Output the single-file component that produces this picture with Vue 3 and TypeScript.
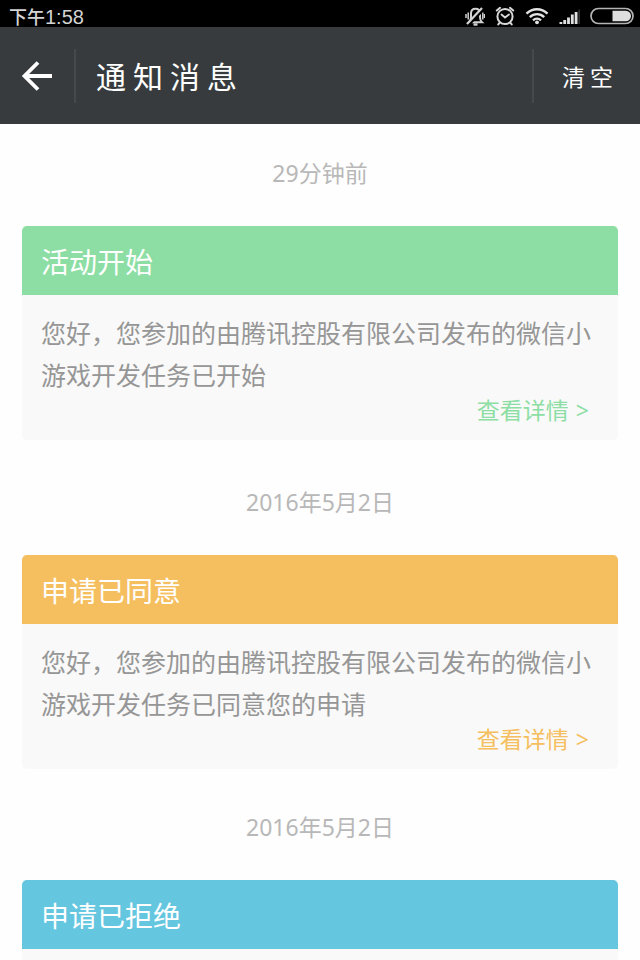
<script setup lang="ts">
interface Notice {
  id: number
  time: string
  title: string
  tone: 'green' | 'orange' | 'blue'
  message?: string
}

const notices: Notice[] = [
  {
    id: 1,
    time: '29分钟前',
    title: '活动开始',
    tone: 'green',
    message: '您好，您参加的由腾讯控股有限公司发布的微信小游戏开发任务已开始',
  },
  {
    id: 2,
    time: '2016年5月2日',
    title: '申请已同意',
    tone: 'orange',
    message: '您好，您参加的由腾讯控股有限公司发布的微信小游戏开发任务已同意您的申请',
  },
  { id: 3, time: '2016年5月2日', title: '申请已拒绝', tone: 'blue' },
]
</script>

<template>
  <div class="page">
    <div class="status">
      <span class="clock">下午<span class="digits">1:58</span></span>
      <div class="indicators">
        <svg class="bell" width="20" height="22" viewBox="0 0 20 22" fill="none" stroke="#d2d2d2">
          <path d="M4 17.300h13c-1.500-1.400-2-3-2-5V8.500c0-3-1.700-4.700-4.500-4.700S6 5.500 6 8.500v3.800c0 2-.5 3.600-2 5z" stroke-width="2" />
          <path d="M8.500 19.500h4" stroke-width="2.400" />
          <path d="M3.200 7.500v7M1 9v4M17.800 7.500v7M19.600 9v4" stroke-width="1.500" />
          <path d="M3.300 20.300L18.500 4.300" stroke="#000" stroke-width="2.400" />
          <path d="M2 19L17 3" stroke-width="2.200" />
        </svg>
        <svg class="alarm" width="20" height="22" viewBox="0 0 20 22" fill="none" stroke="#d8d8d8" stroke-linecap="round">
          <circle cx="10" cy="11.500" r="7.600" stroke-width="2" />
          <path d="M1.800 5.500L5 2.800M18.200 5.500L15 2.800M4.700 17.700l-1.400 1.700M15.300 17.700l1.400 1.700" stroke-width="2" />
          <path d="M6.500 9.500l3.500 3 4-3" stroke-width="1.800" />
        </svg>
        <svg class="wifi" width="24" height="22" viewBox="0 0 24 22" fill="none" stroke="#e2e2e2">
          <path d="M1.500 8.700C7.500 2.700 16.500 2.700 22.500 8.700" stroke-width="2.400" />
          <path d="M4.800 12.100C9 8.100 15 8.100 19.200 12.100" stroke-width="2.400" />
          <path d="M8 15.300c2.300-2.100 5.700-2.100 8 0" stroke-width="2.300" />
          <circle cx="12" cy="17.300" r="1.900" fill="#e2e2e2" stroke="none" />
        </svg>
        <svg class="signal" width="21" height="22" viewBox="0 0 21 22" fill="#e0e0e0">
          <rect x="0.500" y="17" width="2.800" height="2" />
          <rect x="4.300" y="15" width="2.800" height="4" />
          <rect x="8.100" y="12.500" width="2.800" height="6.500" />
          <rect x="11.900" y="9.500" width="2.800" height="9.500" />
          <rect x="15.700" y="7" width="2.800" height="12" />
          <rect x="19.300" y="4.500" width="1.700" height="14.500" fill="#303030" />
        </svg>
        <svg class="battery" width="44" height="18" viewBox="0 0 44 18">
          <rect x="1" y="1.500" width="42" height="15" rx="7.500" fill="none" stroke="#b4b4b4" stroke-width="1.700" />
          <path d="M22.500 3.800h13.300a5.200 5.200 0 0 1 0 10.400H22.500z" fill="#dedede" />
        </svg>
      </div>
    </div>

    <header class="bar">
      <button class="back" type="button" aria-label="返回">
        <svg width="32" height="32" viewBox="0 0 32 32" fill="none" stroke="#fff" stroke-width="3.800">
          <path d="M17 2.500L3.500 16 17 29.500M3 16h28" />
        </svg>
      </button>
      <h1 class="heading">通知消息</h1>
      <button class="clear" type="button">清空</button>
    </header>

    <main class="list">
      <section v-for="notice in notices" :key="notice.id" class="notice" :class="notice.tone">
        <time class="time">{{ notice.time }}</time>
        <article class="card">
          <h2 class="title">{{ notice.title }}</h2>
          <div class="body">
            <p v-if="notice.message" class="message">{{ notice.message }}</p>
            <a v-if="notice.message" class="more" href="#">
              <span>查看详情</span>
              <span>&gt;</span>
            </a>
          </div>
        </article>
      </section>
    </main>
  </div>
</template>

<style>
body {
  margin: 0;
  background: #fefefe;
}
</style>

<style scoped>
.page {
  height: 100vh;
  overflow: hidden;
  font-family: "Noto Sans", "Noto Sans CJK SC", sans-serif;
  background: #fefefe;
}

.status {
  display: flex;
  align-items: center;
  justify-content: space-between;
  height: 27px;
  padding: 5px 6px 0 9px;
  box-sizing: border-box;
  background: #000;
  color: #d4d4d4;
}

.clock {
  font-family: "Noto Sans CJK SC", sans-serif;
  font-size: 18px;
  font-weight: 500;
  line-height: 22px;
}

.digits {
  font-family: "Liberation Sans", sans-serif;
  font-size: 20px;
}

.indicators {
  display: flex;
  align-items: center;
  gap: 10px;
}

.indicators svg {
  display: block;
}

.bar {
  display: flex;
  align-items: center;
  height: 97px;
  background: #373b3e;
  color: #fff;
}

button {
  margin: 0;
  border: 0;
  background: none;
  color: inherit;
  font-family: inherit;
  cursor: pointer;
}

.back {
  display: flex;
  align-items: center;
  width: 76px;
  height: 54px;
  padding: 0 0 0 21px;
  border-right: 2px solid #45494c;
}

.heading {
  flex: 1;
  margin: 0;
  padding: 2px 0 0 20px;
  font-size: 30px;
  font-weight: 400;
  line-height: 40px;
  letter-spacing: 7px;
}

.clear {
  height: 54px;
  padding: 2px 22px 0 28px;
  border-left: 2px solid #45494c;
  font-size: 23px;
  line-height: 32px;
  letter-spacing: 5px;
}

.list {
  padding: 34px 22px 0;
}

.notice {
  margin-bottom: 43px;
}

.notice:first-child {
  padding-bottom: 4px;
}

.time {
  display: block;
  margin-bottom: 38px;
  color: #b8b8b8;
  font-size: 23px;
  line-height: 30px;
  text-align: center;
}

.card {
  overflow: hidden;
  border-radius: 5px;
  background: #f9f9f9;
}

.title {
  margin: 0;
  padding: 16px 19px 13px;
  background: var(--tone);
  color: #fff;
  font-size: 28px;
  font-weight: 400;
  line-height: 40px;
}

.body {
  display: flex;
  flex-direction: column;
  padding: 17px 19px 16px;
}

.message {
  margin: 0;
  color: #969696;
  font-size: 25px;
  line-height: 42px;
}

.more {
  display: flex;
  gap: 7px;
  align-self: flex-end;
  margin-right: 10px;
  color: var(--tone);
  font-size: 23px;
  line-height: 28px;
  text-decoration: none;
}

.green {
  --tone: #8ddea4;
}

.orange {
  --tone: #f5be5e;
}

.blue {
  --tone: #65c6e0;
}
</style>
